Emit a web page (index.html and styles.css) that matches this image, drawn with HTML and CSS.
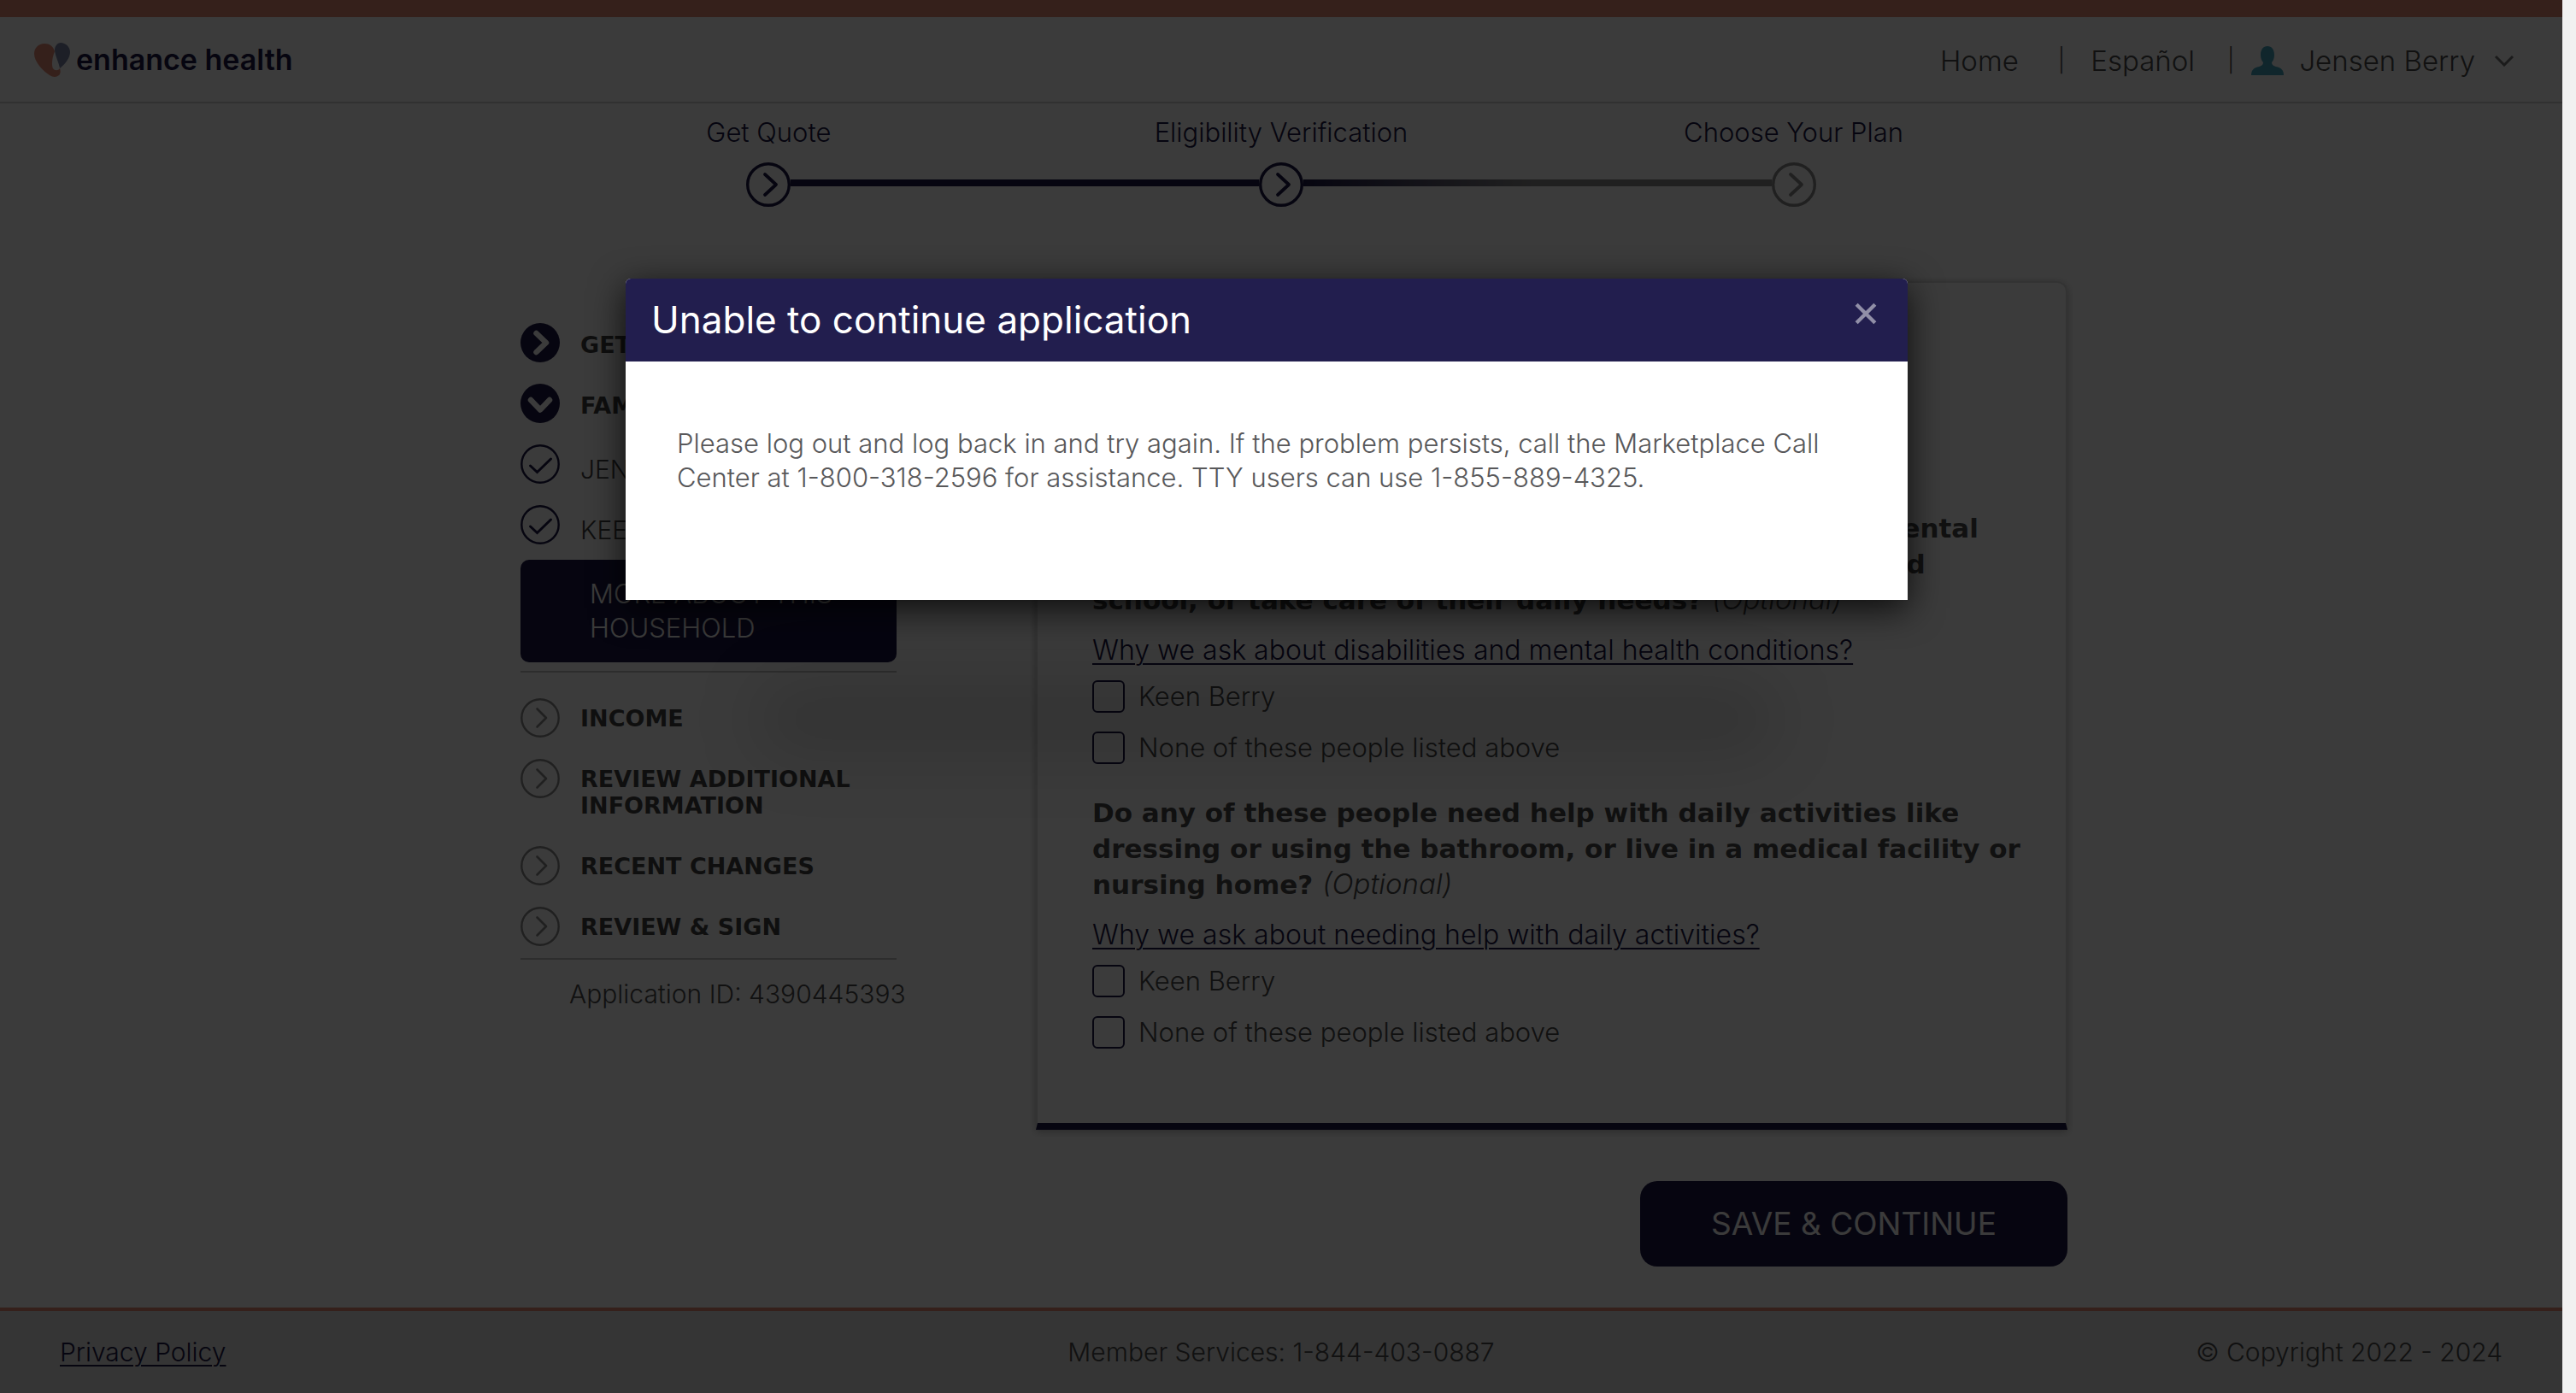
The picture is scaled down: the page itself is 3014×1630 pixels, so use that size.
FILE: index.html
```html
<!DOCTYPE html>
<html lang="en">
<head>
<meta charset="utf-8">
<title>Enhance Health - Application</title>
<link rel="stylesheet" href="styles.css">
</head>
<body>
<svg width="0" height="0" class="sprite" aria-hidden="true">
  <symbol id="step-right" viewBox="0 0 52 52"><circle cx="26" cy="26" r="24.300" fill="none" stroke="currentColor" stroke-width="3.400"/><path d="M22 14 35 26 22 38" fill="none" stroke="currentColor" stroke-width="3.800" stroke-linecap="round" stroke-linejoin="round"/></symbol>
  <symbol id="ring-right" viewBox="0 0 46 46"><circle cx="23" cy="23" r="21.7" fill="none" stroke="currentColor" stroke-width="2.4"/><path d="M19.5 12.5 30 23 19.5 33.5" fill="none" stroke="currentColor" stroke-width="2.6" stroke-linecap="round" stroke-linejoin="round"/></symbol>
  <symbol id="ring-check" viewBox="0 0 46 46"><circle cx="23" cy="23" r="21.7" fill="none" stroke="currentColor" stroke-width="2.4"/><path d="M11.500 25 19.500 32.500 35.500 17" fill="none" stroke="currentColor" stroke-width="3" stroke-linecap="round"/></symbol>
  <symbol id="disc-right" viewBox="0 0 46 46"><circle cx="23" cy="23" r="23" fill="currentColor"/><path d="M18.500 12 30 23 18.500 34" fill="none" stroke="#fff" stroke-width="6.500" stroke-linecap="round" stroke-linejoin="round"/></symbol>
  <symbol id="disc-down" viewBox="0 0 46 46"><circle cx="23" cy="23" r="23" fill="currentColor"/><path d="M12 19 23 30.500 34 19" fill="none" stroke="#fff" stroke-width="6.500" stroke-linecap="round" stroke-linejoin="round"/></symbol>
</svg>
<div class="shell">
  <div class="page">
    <header class="site-header">
      <a class="brand" href="#">
        <svg class="brand-mark" viewBox="0 0 42 40" aria-hidden="true">
          <path d="M12 1C5 1 0 6 0 13c0 9 10 20 18 25 4 2.500 8 2.500 11 0 2-2 2-5 1-8-2 3-6 3-8 0-2-4-1-12 2-20C22 4 18 1 12 1z" fill="#e68b75"/>
          <path d="M31 0c-4 0-7 4-7 9 1 8 5 14 6 21 6-5 12-12 12-19C42 5 37 0 31 0z" fill="#7d87a8"/>
        </svg>
        <span>enhance health</span>
      </a>
      <nav class="site-nav">
        <a class="nav-home" href="#">Home</a>
        <span class="bar">|</span>
        <a class="nav-lang" href="#">Español</a>
        <span class="bar">|</span>
        <button class="account" type="button">
          <svg class="person" viewBox="0 0 38 34" aria-hidden="true"><path d="M19 0c-5 0-8 4-8 10 0 4 1 7 3 9 0 3-2 4-5 5-6 1-9 4-9 10h38c0-6-3-9-9-10-3-1-5-2-5-5 2-2 3-5 3-9 0-6-3-10-8-10z" fill="#46a5bf"/></svg>
          Jensen Berry
          <svg class="caret" viewBox="0 0 24 14" aria-hidden="true"><path d="M2 2 12 12 22 2" fill="none" stroke="#777" stroke-width="3"/></svg>
        </button>
      </nav>
    </header>

    <ol class="stepper">
      <li class="step"><span class="step-label">Get Quote</span><svg class="step-icon"><use href="#step-right"/></svg></li>
      <li class="step"><span class="step-label">Eligibility Verification</span><svg class="step-icon"><use href="#step-right"/></svg></li>
      <li class="step step-next"><span class="step-label">Choose Your Plan</span><svg class="step-icon"><use href="#step-right"/></svg></li>
    </ol>

    <div class="layout">
      <aside class="sidebar">
        <ul class="menu">
          <li class="item"><svg class="icon"><use href="#disc-right"/></svg><a href="#">GET STARTED</a></li>
          <li class="item"><svg class="icon"><use href="#disc-down"/></svg><a href="#">FAMILY</a></li>
          <li class="item sub"><svg class="icon"><use href="#ring-check"/></svg><a href="#">JENSEN</a></li>
          <li class="item sub"><svg class="icon"><use href="#ring-check"/></svg><a href="#">KEEN</a></li>
        </ul>
        <a class="current" href="#">MORE ABOUT THIS HOUSEHOLD</a>
        <ul class="menu menu-later">
          <li class="item"><svg class="icon"><use href="#ring-right"/></svg><a href="#">INCOME</a></li>
          <li class="item"><svg class="icon"><use href="#ring-right"/></svg><a href="#">REVIEW ADDITIONAL INFORMATION</a></li>
          <li class="item"><svg class="icon"><use href="#ring-right"/></svg><a href="#">RECENT CHANGES</a></li>
          <li class="item"><svg class="icon"><use href="#ring-right"/></svg><a href="#">REVIEW &amp; SIGN</a></li>
        </ul>
        <p class="app-id">Application ID: 4390445393</p>
      </aside>

      <main class="content">
        <form>
          <div class="card">
            <fieldset class="question">
              <legend>Do any of these people have a physical disability or mental<br>health condition that limits their ability to work, attend<br>school, or take care of their daily needs? <i>(Optional)</i></legend>
              <a class="help" href="#">Why we ask about disabilities and mental health conditions?</a>
              <label class="choice"><input type="checkbox">Keen Berry</label>
              <label class="choice"><input type="checkbox">None of these people listed above</label>
            </fieldset>
            <fieldset class="question">
              <legend>Do any of these people need help with daily activities like<br>dressing or using the bathroom, or live in a medical facility or<br>nursing home? <i>(Optional)</i></legend>
              <a class="help" href="#">Why we ask about needing help with daily activities?</a>
              <label class="choice"><input type="checkbox">Keen Berry</label>
              <label class="choice"><input type="checkbox">None of these people listed above</label>
            </fieldset>
          </div>
          <button class="save" type="submit">SAVE &amp; CONTINUE</button>
        </form>
      </main>
    </div>

    <footer class="site-footer">
      <a href="#">Privacy Policy</a>
      <span>Member Services: 1-844-403-0887</span>
      <span>© Copyright 2022 - 2024</span>
    </footer>

    <div class="overlay">
      <section class="modal" role="dialog" aria-modal="true" aria-labelledby="modal-title">
        <header class="modal-head">
          <h2 id="modal-title">Unable to continue application</h2>
          <button class="close" type="button" aria-label="Close"><svg viewBox="0 0 24 24"><path d="M2 2 22 22M22 2 2 22" stroke="currentColor" stroke-width="4"/></svg></button>
        </header>
        <p class="modal-body">Please log out and log back in and try again. If the problem persists, call the Marketplace Call Center at 1-800-318-2596 for assistance. TTY users can use 1-855-889-4325.</p>
      </section>
      <div class="glow"></div>
    </div>
  </div>
  <div class="scroll-track"></div>
</div>
</body>
</html>
```
FILE: styles.css
```css
:root {
  --navy: #1c1845;
  --coral: #e68b75;
  --ink: #4a4a4a;
}
* { box-sizing: border-box; }
body {
  margin: 0;
  font: 300 31px/40px Inter, "Liberation Sans", sans-serif;
  color: var(--ink);
}
a { color: inherit; text-decoration: none; }
ul, ol { list-style: none; margin: 0; padding: 0; }
button { font: inherit; color: inherit; border: 0; background: none; padding: 0; }
.sprite { position: absolute; }

.shell { display: flex; min-height: 100vh; }
.page { position: relative; flex: 1; display: flex; flex-direction: column; background: #fff; }
.scroll-track { width: 16px; background: #f1f1f1; }

.site-header {
  display: flex;
  align-items: center;
  justify-content: space-between;
  height: 121px;
  padding: 0 56px 0 40px;
  border-top: 20px solid var(--coral);
  border-bottom: 2px solid #d2d2d2;
}
.brand { display: flex; align-items: center; gap: 7px; font-size: 34px; font-weight: 600; color: var(--navy); }
.brand-mark { width: 42px; height: 40px; }
.site-nav { display: flex; align-items: center; padding-top: 2px; font-size: 33px; }
.bar { font-size: 27px; }
.nav-home { margin-right: 46px; }
.nav-lang { margin: 0 38px 0 30px; }
.account { display: flex; align-items: center; margin-left: 20px; }
.person { width: 38px; height: 34px; margin-right: 18px; }
.caret { width: 24px; height: 14px; margin-left: 22px; }

.stepper { display: grid; grid-template-columns: repeat(3, 1fr); width: 60%; margin: 14px auto 0; color: var(--navy); }
.step { display: grid; grid-template-columns: 1fr 52px 1fr; align-items: center; row-gap: 15px; }
.step-label { grid-column: 1 / -1; text-align: center; }
.step-icon { grid-column: 2; width: 52px; height: 52px; }
.step::before, .step::after { content: ""; grid-row: 2; height: 8px; margin-bottom: 4px; }
.step::before { grid-column: 1; }
.step::after { grid-column: 3; }
.step:first-child::after, .step:nth-child(2)::before { background: var(--navy); }
.step:nth-child(2)::after { background: linear-gradient(90deg, var(--navy), #8c8c8c); }
.step-next::before { background: #8c8c8c; }
.step-next .step-icon { color: #8c8c8c; }

.layout {
  display: grid;
  grid-template-columns: 440px 1fr;
  gap: 163px;
  width: 100%;
  max-width: 1840px;
  margin: 87px auto 0;
  padding-left: 30px;
}
.sidebar { padding-top: 49px; }
.menu { display: grid; gap: 25px; }
.item { display: flex; align-items: flex-start; gap: 24px; height: 46px; font: 700 27px/31px "DejaVu Sans", sans-serif; color: #444; }
.item a { padding-top: 10px; }
.icon { flex: none; width: 46px; height: 46px; color: var(--navy); }
.sub { font: 300 30px/31px Inter, sans-serif; }
.sub a { padding-top: 14px; }
.current {
  display: block;
  margin-top: 18px;
  padding: 20px 40px 20px 81px;
  border-radius: 10px;
  background: var(--navy);
  color: #fff;
}
.menu-later { gap: 24px; margin-top: 10px; padding: 30px 0 13px; border: solid #c4c4c4; border-width: 2px 0; }
.menu-later .item { height: auto; }
.menu-later .item a { padding: 8px 0; }
.menu-later .icon { color: #8c8c8c; }
.app-id { margin: 20px 0 0; padding-left: 57px; font-size: 30px; white-space: nowrap; }

.card {
  padding: 266px 40px 87px 64px;
  border: 2px solid #ddd;
  border-bottom: 8px solid var(--navy);
  border-radius: 12px 12px 0 0;
  box-shadow: 0 2px 10px rgba(0, 0, 0, .3);
}
.question { display: flex; flex-direction: column; align-items: flex-start; gap: 22px; margin: 0; padding: 0; border: 0; }
.question + .question { margin-top: 36px; }
legend { padding: 0; margin-bottom: 18px; font: 700 31px/42px "DejaVu Sans", sans-serif; white-space: nowrap; }
legend i { font: italic 300 33px/30px Inter, sans-serif; }
.help { margin-bottom: -7px; font-size: 32px; color: var(--navy); text-decoration: underline; text-decoration-thickness: 2px; text-underline-offset: 4px; }
.choice { display: flex; align-items: center; gap: 16px; height: 38px; }
.choice input { appearance: none; width: 38px; height: 38px; margin: 0; border: 2px solid var(--navy); border-radius: 6px; }
.save {
  display: block;
  width: 500px;
  height: 100px;
  margin: 60px 0 48px auto;
  border-radius: 20px;
  background: var(--navy);
  color: #fff;
  font-size: 37px;
  font-weight: 400;
}

.site-footer {
  flex: 1;
  display: grid;
  grid-template-columns: 1fr auto 1fr;
  align-items: center;
  padding: 0 70px;
  border-top: 4px solid var(--coral);
  background: #e3e3e3;
  font-size: 30px;
}
.site-footer a { color: var(--navy); justify-self: start; text-decoration: underline; text-decoration-thickness: 2px; text-underline-offset: 4px; }
.site-footer span:last-child { justify-self: end; }

.overlay { position: absolute; inset: 0; padding: 326px 34px 0 0; background: rgba(0, 0, 0, .77); }
.modal {
  position: relative;
  width: 1500px;
  max-width: 100%;
  margin: 0 auto;
  border-radius: 6px 6px 0 0;
  background: #fff;
  box-shadow: 0 10px 40px rgba(0, 0, 0, .8);
}
.modal-head {
  display: flex;
  justify-content: space-between;
  padding: 24px 36px 25px 30px;
  border-radius: 6px 6px 0 0;
  background: #221e4e;
  color: #fff;
}
.modal-head h2 { margin: 0; font-size: 44px; font-weight: 400; line-height: 48px; }
.close { width: 26px; height: 36px; color: #918fa7; }
.close svg { display: block; width: 26px; height: 26px; margin-top: -2px; }
.modal-body { margin: 0; padding: 76px 60px 123px; color: #58585a; }
.glow { width: 1200px; height: 90px; margin: 94px auto 0; border-radius: 50px; background: rgba(0, 0, 0, .12); filter: blur(36px); }
```
